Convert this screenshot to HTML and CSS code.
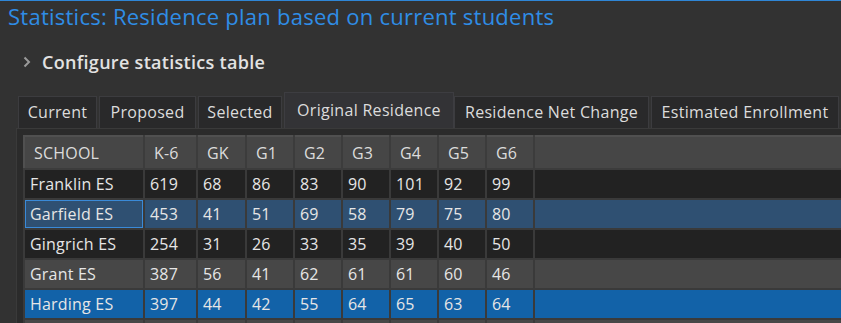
FILE: index.html
```html
<!DOCTYPE html>
<html>
<head>
<meta charset="utf-8">
<link rel="stylesheet" href="styles.css">
</head>
<body>
<div class="app">
  <h1 class="title">Statistics: Residence plan based on current students</h1>
  <div class="config">
    <svg class="chev" width="8" height="12" viewBox="0 0 8 12"><path d="M1.5 1.5 L6 6 L1.5 10.5" fill="none" stroke="#9a9a9a" stroke-width="2"/></svg>
    <span>Configure statistics table</span>
  </div>
  <div class="tabs">
    <div class="tab t1">Current</div>
    <div class="tab t2">Proposed</div>
    <div class="tab t3">Selected</div>
    <div class="tab t4 active">Original Residence</div>
    <div class="tab t5">Residence Net Change</div>
    <div class="tab t6">Estimated Enrollment</div>
  </div>
  <div class="panel">
    <table class="grid">
      <colgroup>
        <col class="c-school"><col class="c-k6"><col class="c-gk"><col class="c-g"><col class="c-g"><col class="c-g"><col class="c-g"><col class="c-g"><col class="c-g"><col>
      </colgroup>
      <thead>
        <tr><th>SCHOOL</th><th>K-6</th><th>GK</th><th>G1</th><th>G2</th><th>G3</th><th>G4</th><th>G5</th><th>G6</th><th></th></tr>
      </thead>
      <tbody>
        <tr class="r-dark"><td>Franklin ES</td><td>619</td><td>68</td><td>86</td><td>83</td><td>90</td><td>101</td><td>92</td><td>99</td><td></td></tr>
        <tr class="r-sel"><td class="focus">Garfield ES</td><td>453</td><td>41</td><td>51</td><td>69</td><td>58</td><td>79</td><td>75</td><td>80</td><td></td></tr>
        <tr class="r-dark"><td>Gingrich ES</td><td>254</td><td>31</td><td>26</td><td>33</td><td>35</td><td>39</td><td>40</td><td>50</td><td></td></tr>
        <tr class="r-grey"><td>Grant ES</td><td>387</td><td>56</td><td>41</td><td>62</td><td>61</td><td>61</td><td>60</td><td>46</td><td></td></tr>
        <tr class="r-blue"><td>Harding ES</td><td>397</td><td>44</td><td>42</td><td>55</td><td>64</td><td>65</td><td>63</td><td>64</td><td></td></tr>
        <tr class="r-grey"><td>&nbsp;</td><td></td><td></td><td></td><td></td><td></td><td></td><td></td><td></td><td></td></tr>
      </tbody>
    </table>
  </div>
</div>
</body>
</html>
```

FILE: styles.css
```css
html, body {
  margin: 0;
  padding: 0;
  background: #323232;
  overflow: hidden;
}
.app {
  width: 841px;
  height: 323px;
  overflow: hidden;
  border-top: 1px solid #2f86d6;
  box-sizing: border-box;
  font-family: "Open Sans", "Noto Sans", sans-serif;
  color: #dcdcdc;
}
.title {
  margin: 0;
  padding: 0 0 0 8px;
  height: 33px;
  line-height: 31px;
  font-size: 22px;
  letter-spacing: 0.25px;
  font-weight: 400;
  color: #2f8de6;
  white-space: nowrap;
}
.config {
  display: flex;
  align-items: center;
  height: 58px;
  padding-left: 23px;
  padding-bottom: 2px;
  box-sizing: border-box;
}
.chev { margin-right: 11px; }
.config span {
  font-size: 18px;
  letter-spacing: 0.3px;
  font-weight: 600;
  color: #e2e2e2;
}
.tabs {
  display: flex;
  align-items: flex-end;
  padding-left: 18px;
  height: 36px;
}
.tab {
  height: 32px;
  line-height: 30px;
  box-sizing: border-box;
  border: 1px solid #3c3c3f;
  border-bottom: none;
  background: #29292a;
  font-size: 16px;
  letter-spacing: 0.3px;
  color: #dcdcdc;
  text-align: center;
  margin-right: 2px;
}
.t1 { width: 79px; }
.t2 { width: 97px; }
.t3 { width: 84px; }
.t4 { width: 170px; }
.t5 { width: 195px; }
.t6 { width: 188px; }
.tab.active {
  height: 36px;
  line-height: 34px;
  background: #333336;
  margin-right: 0;
  border-color: #3d3d41;
}
.panel {
  margin-left: 16px;
  border-top: 1px solid #3a3a3a;
  border-left: 1px solid #3a3a3a;
  background: #2b2b2b;
  padding: 6px 0 0 6px;
  height: 200px;
}
.grid {
  border-collapse: collapse;
  table-layout: fixed;
  width: 820px;
  font-size: 16px;
}
.c-school { width: 120px; }
.c-k6 { width: 53px; }
.c-gk { width: 49px; }
.c-g { width: 48px; }
.grid th, .grid td {
  border: 2px solid #3a3a3a;
  text-align: left;
  white-space: nowrap;
  font-weight: 400;
  box-sizing: border-box;
  letter-spacing: 0.2px;
}
.grid th {
  height: 33px;
  padding: 0 0 0 9px;
  background: #464646;
  color: #dcdcdc;
  border-color: #3c3c3c;
  border-top: 2px solid #505050;
  border-left: 2px solid #505050;
}
.grid td {
  height: 30px;
  padding: 0 0 0 5px;
  color: #e6e6e6;
}
.r-dark td { background: #222222; }
.r-sel td { background: #2f5072; }
.r-grey td { background: #474747; }
.r-blue td { background: #1262a8; }
.grid td.focus {
  outline: 1px solid #3a8ad8;
  outline-offset: -2px;
}
```
